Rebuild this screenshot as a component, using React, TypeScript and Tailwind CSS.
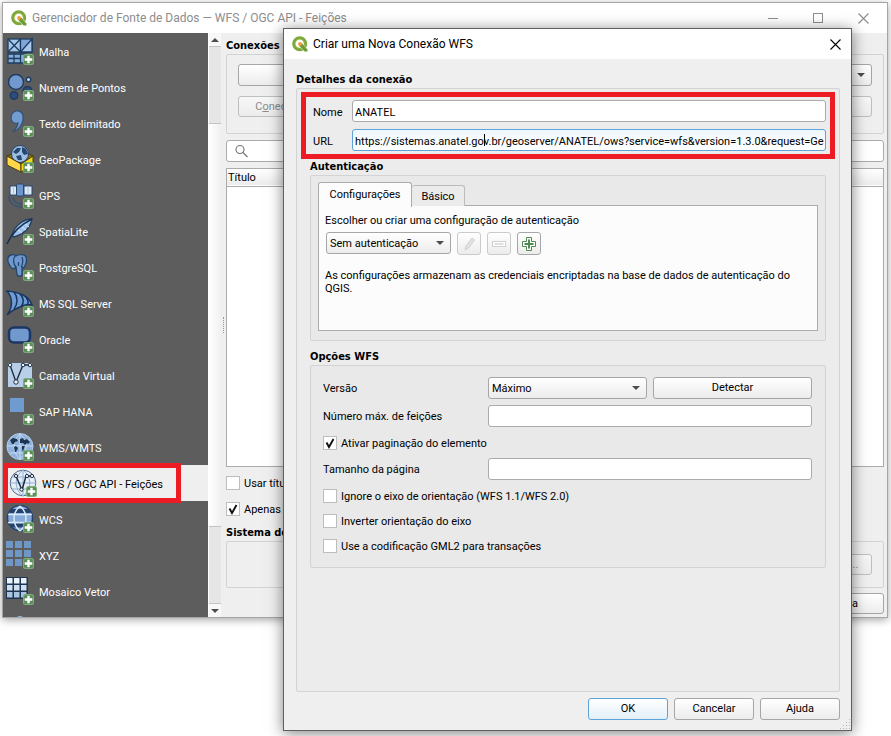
import React, { useState } from "react";

const uiFont = "font-['Roboto','Liberation_Sans',sans-serif]";
const boldFont = "font-['DejaVu_Sans_Condensed','DejaVu_Sans',sans-serif]";

const button = "rounded-[3px] border border-[#a6a6a6] bg-linear-to-b from-white to-[#ececec] text-center";
const disabledButton =
  "rounded-[3px] border border-[#bfbfbf] bg-linear-to-b from-[#f7f7f7] to-[#ececec] text-center text-[#8a8a8a]";
const field =
  "h-[22px] w-full rounded-[3px] border border-[#ababab] bg-white px-[2px] pt-[2px] text-black outline-none";
const frame = "rounded-[2px] border border-[#d3d3d3]";

/* ---------- icons ---------- */

const Plus = () => (
  <g>
    <rect x="17" y="17" width="11" height="11" rx="2.500" fill="#7fae7c" />
    <rect x="18" y="18" width="9" height="9" rx="1.500" fill="#5b8f5a" />
    <path d="M22.500 18.700v7.600M18.700 22.500h7.600" stroke="#fff" strokeWidth="2.400" />
  </g>
);

const icons: Record<string, React.ReactNode> = {
  mesh: (
    <g stroke="#1d3d60" strokeWidth="1.300">
      <rect x="2" y="2" width="12.500" height="13" fill="#a6c6ea" />
      <rect x="14.500" y="2" width="11.500" height="13" fill="#7fa6d6" />
      <path d="M14.500 15L26 2v13z" fill="#a9c8ec" />
      <path d="M2 2l12.500 13M14.500 2L2 15" />
      <path d="M2 17h6v4.500H2zM8 17h6.500v4.500H8zM2 21.500h6V26H2zM8 21.500h6.500V26H8zM14.500 17H20v9h-5.500z" fill="#85abd9" />
    </g>
  ),
  points: (
    <g stroke="#1f3b60" strokeWidth="1.400">
      <circle cx="10" cy="9" r="7.500" fill="#7199cd" />
      <circle cx="22.500" cy="6.500" r="2.200" fill="#c6dcf4" />
      <circle cx="8" cy="22.500" r="3.800" fill="#2c4c7c" />
      <circle cx="21.500" cy="18" r="4.500" fill="#2a4a78" />
    </g>
  ),
  comma: (
    <path
      d="M10 2c5-1 8 3 7 9-1 6-4 9-10 12 3-4 5-6 5-9-4 1-7-1-7-5 0-4 2-6 5-7z"
      fill="#729bd0"
      stroke="#2f5079"
      strokeWidth="1.200"
    />
  ),
  geopackage: (
    <g>
      <path d="M1 11l14-6 12 6-12 8z" fill="#8b7212" stroke="#4f3a0c" />
      <circle cx="14" cy="9" r="8.500" fill="#9cbfe6" stroke="#24405f" />
      <path d="M7 7l4-4 4 0-2 4-3 2zM16 2l4 2 2 5-4 1-2-3zM10 11l5-1 1 5h-4z" fill="#27476e" />
      <path d="M1 11l14 8v8L1 20z" fill="#ffd84a" stroke="#4f3a0c" />
      <path d="M15 19l12-8v9l-12 7z" fill="#eadb1c" stroke="#4f3a0c" />
    </g>
  ),
  gps: (
    <g stroke="#27476b">
      <rect x="4" y="5" width="7" height="9" fill="#dbe9f9" />
      <rect x="18" y="5" width="8" height="9" fill="#dbe9f9" />
      <rect x="10.500" y="3" width="7" height="12" rx="1" fill="#6d97cc" />
      <path d="M7.500 5v9M22 5v9" stroke="#a5c2e5" />
      <path d="M3 15c0 7 5 11 13 11M7 16c0 4 4 7 9 7" fill="none" strokeWidth="1.800" stroke="#3d5573" />
    </g>
  ),
  feather: (
    <g>
      <path d="M26 2c-8 0-17 6-20 16l2 2c8-2 16-8 18-18z" fill="#9fc3ec" stroke="#1f3f63" strokeWidth="1.300" />
      <path d="M26 2C16 7 6 15 1 27" fill="none" stroke="#16304d" strokeWidth="1.500" />
      <path d="M19 7l4 3M16 10l4 3M12 13l4 3" stroke="#d8e8fa" />
    </g>
  ),
  elephant: (
    <g fill="#6f99ce" stroke="#24456d" strokeWidth="1.300">
      <path d="M2 5c1-4 6-4 8-2 3-2 9-2 10 1 1 4 0 9-3 11l-1-1v7c0 3-5 3-5 0l-1-7-3 2C4 14 1 9 2 5z" />
      <path d="M9 3c-2 3-2 8 1 11M16 4c1 3 1 7-1 10M12.500 9v4" fill="none" />
    </g>
  ),
  mssql: (
    <g stroke="#173760" strokeWidth="1.500" fill="#6f9bd6">
      <path d="M1 2c11 1 22 5 25 14-4-1-9 0-12 2-5 2-9 4-13 8 6-8 6-17 0-24z" />
      <path d="M8 3c4 5 4 12 0 17M14 5c4 4 4 9 1 13M20 8c2 3 3 6 1 8" fill="none" />
    </g>
  ),
  oracle: <rect x="3" y="2.500" width="21" height="15" rx="5" fill="#7199cd" stroke="#1c3765" strokeWidth="2.500" />,
  virtual: (
    <g>
      <rect x="2" y="2" width="24" height="24" fill="#b7cfe9" />
      <path d="M4 4l6 17 7-17h8" fill="none" stroke="#222f40" strokeWidth="1.400" />
      <g fill="#eaf2fb" stroke="#222f40">
        <circle cx="4" cy="4" r="1.800" />
        <circle cx="10" cy="21" r="2.200" />
        <circle cx="17" cy="4" r="1.800" />
        <circle cx="24" cy="4" r="1.800" />
      </g>
    </g>
  ),
  hana: <rect x="4" y="1" width="14" height="14" fill="#6f9bd1" />,
  wms: (
    <g>
      <circle cx="14" cy="13.500" r="13" fill="#8fb3dc" stroke="#b4cdea" />
      <path
        d="M14 1v25M1 13h26M4 7h20M4 20h20M14 1c-8 7-8 18 0 25M14 1c8 7 8 18 0 25"
        stroke="#c5daf1"
        fill="none"
      />
      <path
        fill="#1d3654"
        d="M4 7l3-2 4 1 1 2-3 1-1 2-2 0zM14 6l3-1 1 2 3-1 3 3-2 2-1-1-2 2-2-2-3 0zM8 14l2-1 2 2-2 4-1 0zM16 13h3l-1 2-1 4-1-3z"
      />
    </g>
  ),
  wfs: (
    <g>
      <circle cx="14" cy="14" r="12.800" fill="#e6eef8" stroke="#53687f" />
      <path
        d="M14 1v26M1 14h26M3 8h22M3 20h22M14 1c-9 7-9 19 0 26M14 1c9 7 9 19 0 26"
        fill="none"
        stroke="#8fb0d6"
      />
      <path d="M7 7l6 14 4-14h6" fill="none" stroke="#1d2c3d" strokeWidth="1.500" />
      <g fill="#fff" stroke="#1d2c3d">
        <circle cx="7" cy="7" r="1.600" />
        <circle cx="12.500" cy="20.500" r="1.600" />
        <circle cx="18" cy="7" r="1.600" />
        <circle cx="23" cy="7" r="1.600" />
      </g>
    </g>
  ),
  wcs: (
    <g>
      <circle cx="14" cy="13" r="12.500" fill="#86abd8" stroke="#23436b" strokeWidth="1.500" />
      <path d="M4 6h20M4 20.500h20" stroke="#23436b" strokeWidth="4" />
      <path
        d="M2 9.500h24M2 17.500h24M14 1c-8 7-8 18 0 25M14 1c8 7 8 18 0 25"
        fill="none"
        stroke="#d9e8f8"
        strokeWidth="1.500"
      />
    </g>
  ),
  xyz: (
    <g fill="#6f97c6">
      {[0, 9, 18].map((y) => [0, 9, 18].map((x) => <rect key={`${x}-${y}`} x={x} y={y} width="7" height="7" />))}
    </g>
  ),
  vtile: (
    <g>
      <rect x="0" y="0" width="22" height="22" fill="#1d3550" />
      {["#e9f1fa", "#cfdff1", "#a9c3e3"].map((fill, r) =>
        [0, 1, 2].map((c) => (
          <rect key={`${r}-${c}`} x={1 + c * 7} y={1 + r * 7} width="5.500" height="5.500" fill={fill} />
        ))
      )}
    </g>
  ),
  cloud: <ellipse cx="14" cy="7" rx="4" ry="4" fill="#8fb8e6" />,
};

const Logo = () => (
  <svg viewBox="0 0 16 16" className="size-4 shrink-0">
    <circle cx="7.700" cy="7.700" r="5.900" fill="none" stroke="#7da83c" strokeWidth="3.200" />
    <circle cx="7.700" cy="7.700" r="4.400" fill="none" stroke="#b9cf6b" strokeWidth=".6" />
    <path d="M7.500 7.500h3l5.200 6v2.300h-3L7.500 10.500z" fill="#6d9c35" stroke="#fff" strokeWidth=".5" />
    <circle cx="8" cy="8" r="1.900" fill="#f09a3c" />
  </svg>
);

const Arrow = ({ up = false }: { up?: boolean }) => (
  <svg viewBox="0 0 8 4" className="h-1 w-2">
    <path d={up ? "M0 4L4 0l4 4z" : "M0 0h8L4 4z"} fill="#4d4d4d" />
  </svg>
);

const CloseIcon = () => (
  <svg viewBox="0 0 11 11" className="size-[11px]">
    <path d="M.5.5l10 10M10.500.5l-10 10" stroke="currentColor" strokeWidth="1.100" />
  </svg>
);

/* ---------- controls ---------- */

type SelectProps = { id: string; value: string; label?: string };

const Select = ({ id, value, label }: SelectProps) => (
  <div className="relative">
    <select
      id={id}
      aria-label={label}
      className={`${button} h-[22px] w-full appearance-none pt-px pr-5 pl-[3px] text-left outline-none`}
    >
      <option>{value}</option>
    </select>
    <span className="pointer-events-none absolute inset-y-0 right-[7px] flex items-center">
      <Arrow />
    </span>
  </div>
);

type CheckProps = { label: string; initial?: boolean };

const Check = ({ label, initial = false }: CheckProps) => {
  const [checked, setChecked] = useState(initial);
  return (
    <label className="flex h-[19px] items-center gap-1 whitespace-nowrap">
      <span className="relative size-[14px] shrink-0">
        <input
          type="checkbox"
          checked={checked}
          onChange={() => setChecked(!checked)}
          className="block size-[14px] appearance-none border border-[#bdbdbd] bg-white"
        />
        {checked && (
          <svg viewBox="0 0 14 14" className="pointer-events-none absolute inset-0">
            <path d="M3.500 6.500l2.500 4.500 4.500-8" fill="none" stroke="#111" strokeWidth="1.900" />
          </svg>
        )}
      </span>
      <span className="pt-[2px]">{label}</span>
    </label>
  );
};

const Heading = ({ children }: { children: React.ReactNode }) => (
  <h2 className={`${boldFont} pt-px text-[11px] leading-[14px] font-bold whitespace-nowrap`}>{children}</h2>
);

/* ---------- main window ---------- */

const sources = [
  { icon: "mesh", label: "Malha" },
  { icon: "points", label: "Nuvem de Pontos" },
  { icon: "comma", label: "Texto delimitado" },
  { icon: "geopackage", label: "GeoPackage" },
  { icon: "gps", label: "GPS" },
  { icon: "feather", label: "SpatiaLite" },
  { icon: "elephant", label: "PostgreSQL" },
  { icon: "mssql", label: "MS SQL Server" },
  { icon: "oracle", label: "Oracle" },
  { icon: "virtual", label: "Camada Virtual" },
  { icon: "hana", label: "SAP HANA" },
  { icon: "wms", label: "WMS/WMTS" },
  { icon: "wfs", label: "WFS / OGC API - Feições" },
  { icon: "wcs", label: "WCS" },
  { icon: "xyz", label: "XYZ" },
  { icon: "vtile", label: "Mosaico Vetor" },
  { icon: "cloud", label: "" },
];

const Sidebar = () => (
  <ul className="w-[205px] shrink-0 overflow-hidden bg-[#5d5d5d] text-white contain-size">
    {sources.map(({ icon, label }) => {
      const active = icon === "wfs";
      return (
        <li
          key={icon}
          className={`relative flex h-9 items-center ${active ? "bg-[#efefef] pl-[6px] text-black" : "pl-[3px]"}`}
        >
          <svg viewBox="0 0 28 28" className="size-7 shrink-0">
            {icons[icon]}
            <Plus />
          </svg>
          <span className="pt-[3px] pl-[5px]">{label}</span>
          {active && (
            <span className="pointer-events-none absolute -top-[2px] -bottom-[2px] left-0 w-[178px] border-[5px] border-[#ed1c24]" />
          )}
        </li>
      );
    })}
  </ul>
);

const ScrollBar = () => (
  <div className="flex w-[13px] shrink-0 flex-col border-l border-white bg-[#e6e6e6]">
    <div className="flex h-[13px] items-center justify-center bg-[#f8f8f8]">
      <Arrow up />
    </div>
    <div className="flex-[3_1_0%] border-y border-[#c4c4c4]" />
    <div className="flex-[16_1_0%] bg-linear-to-r from-white to-[#f0f0f0]" />
    <div className="flex-[3_1_0%] border-y border-[#c4c4c4]" />
    <div className="flex h-[13px] items-center justify-center bg-[#f8f8f8]">
      <Arrow />
    </div>
  </div>
);

const SourceManager = () => (
  <div className="mr-[3px] ml-[2px] border border-[#a5a5a5] bg-[#efefef] shadow-[0_2px_8px_rgba(0,0,0,0.35)]">
    <header className="flex h-[30px] items-center bg-white pl-2 text-[12px] text-[#8d8d8d]">
      <Logo />
      <h1 className="flex-1 pl-[5px] whitespace-nowrap">Gerenciador de Fonte de Dados — WFS / OGC API - Feições</h1>
      <div className="flex items-center gap-[35px] pr-[18px]">
        <button aria-label="Minimizar" className="h-px w-[10px] bg-[#8d8d8d]" />
        <button aria-label="Maximizar" className="size-[10px] border border-[#8d8d8d]" />
        <button aria-label="Fechar">
          <CloseIcon />
        </button>
      </div>
    </header>
    <div className="flex">
      <Sidebar />
      <ScrollBar />
      <div className="flex w-[5px] shrink-0 items-center justify-center">
        <span className="h-4 border-l border-dotted border-[#9a9a9a]" />
      </div>
      <main className="flex min-w-0 flex-1 flex-col pt-[5px] pr-[3px] pb-[3px]">
        <Heading>Conexões</Heading>
        <div className={`${frame} mt-px flex flex-col gap-[10px] px-[11px] pt-[9px] pb-4`}>
          <Select id="server" value="" label="Conexões" />
          <div className="flex justify-between">
            <button className={`${disabledButton} h-[21px] w-[79px]`}>
              C<u>o</u>nectar
            </button>
            <button className={`${disabledButton} h-[21px] w-[79px]`} aria-label="Salvar" />
          </div>
        </div>
        <div className="mt-[6px] flex h-[22px] items-center rounded-[3px] border border-[#ababab] bg-white pl-2">
          <svg viewBox="0 0 14 14" className="size-[14px]" fill="none" stroke="#707070" strokeWidth="1.100">
            <circle cx="5" cy="5.500" r="4" />
            <path d="M8 8.500l4.500 4.500" />
          </svg>
          <input aria-label="Buscar" className="h-full min-w-0 flex-1 px-1 outline-none" />
        </div>
        <div className="mt-[6px] h-[299px] border border-[#ababab] bg-white">
          <table className="w-full">
            <thead>
              <tr className="h-[17px] border-b border-[#ababab] bg-linear-to-b from-white to-[#ececec]">
                <th className="pt-[2px] pl-px text-left font-normal">Título</th>
              </tr>
            </thead>
          </table>
        </div>
        <div className="mt-[6px] flex flex-col gap-[7px]">
          <Check label="Usar título" />
          <Check label="Apenas" initial />
        </div>
        <div className="mt-[7px]">
          <Heading>Sistema de Coordenadas</Heading>
        </div>
        <div className={`${frame} mt-px flex justify-end py-3 pr-[11px]`}>
          <button className={`${disabledButton} h-[21px] w-9`}>...</button>
        </div>
        <div className="mt-[5px] flex justify-end">
          <button className={`${button} h-[21px] w-20`}>Ajuda</button>
        </div>
      </main>
    </div>
  </div>
);

/* ---------- dialog ---------- */

const toolButton =
  "flex h-[23px] w-6 items-center justify-center rounded-[3px] border border-[#a6a6a6] bg-linear-to-b from-white to-[#ececec] disabled:border-[#cbcbcb]";

const AuthPanel = () => (
  <section className={`${frame} mt-px bg-[#e9e9e9] px-[7px] pt-[6px] pb-[9px]`}>
    <div className="flex items-end" role="tablist">
      <button
        role="tab"
        aria-selected="true"
        className="z-10 -mb-px h-[25px] w-[94px] rounded-t-[3px] border border-b-0 border-[#ababab] bg-[#fcfcfc]"
      >
        Configurações
      </button>
      <button
        role="tab"
        aria-selected="false"
        className="h-[21px] w-[53px] rounded-t-[3px] border border-b-0 border-l-0 border-[#bcbcbc] bg-[#ebebeb] pt-px"
      >
        Básico
      </button>
    </div>
    <div className="-mt-px h-[126px] border border-[#ababab] bg-[#fcfcfc] px-[6px] pt-2">
      <label htmlFor="auth" className="block leading-[14px]">
        Escolher ou criar uma configuração de autenticação
      </label>
      <div className="mt-1 flex gap-[6px] pl-px">
        <div className="w-[125px]">
          <Select id="auth" value="Sem autenticação" />
        </div>
        <button className={toolButton} aria-label="Editar" disabled>
          <svg viewBox="0 0 14 14" className="size-[14px]">
            <path d="M3 13l1-4 6-8 2.500 2-6 8z" fill="#e2e2e2" stroke="#d0d0d0" />
          </svg>
        </button>
        <button className={toolButton} aria-label="Remover" disabled>
          <svg viewBox="0 0 14 14" className="size-[14px]">
            <rect x=".5" y="4.500" width="13" height="5" fill="#fff" stroke="#cfcfcf" />
            <path d="M2.500 7h9" stroke="#d6d6d6" strokeWidth="1.500" />
          </svg>
        </button>
        <button className={toolButton} aria-label="Adicionar">
          <svg viewBox="0 0 14 14" className="size-[14px]">
            <path d="M4.500.5h5v4h4v5h-4v4h-5v-4h-4v-5h4z" fill="#fff" stroke="#4f8a55" />
            <path d="M7 2.500v9M2.500 7h9" stroke="#4f8a55" strokeWidth="2" />
          </svg>
        </button>
      </div>
      <p className="mt-[14px] leading-[13px]">
        As configurações armazenam as credenciais encriptadas na base de dados de autenticação do QGIS.
      </p>
    </div>
  </section>
);

const WfsOptions = () => (
  <section
    className={`${frame} mt-px grid grid-cols-[159px_1fr_1fr] items-center gap-[6px] bg-[#e9e9e9] px-[13px] pt-[11px] pb-3 pl-3`}
  >
    <label htmlFor="version" className="pt-[2px]">
      Versão
    </label>
    <Select id="version" value="Máximo" />
    <button className={`${button} h-[22px]`}>Detectar</button>
    <label htmlFor="max" className="pt-[2px]">
      Número máx. de feições
    </label>
    <input id="max" className={`${field} col-span-2`} />
    <div className="col-span-3">
      <Check label="Ativar paginação do elemento" initial />
    </div>
    <label htmlFor="page" className="pt-[2px]">
      Tamanho da página
    </label>
    <input id="page" className={`${field} col-span-2`} />
    <div className="col-span-3">
      <Check label="Ignore o eixo de orientação (WFS 1.1/WFS 2.0)" />
    </div>
    <div className="col-span-3">
      <Check label="Inverter orientação do eixo" />
    </div>
    <div className="col-span-3">
      <Check label="Use a codificação GML2 para transações" />
    </div>
  </section>
);

const ConnectionDialog = () => (
  <div
    role="dialog"
    aria-labelledby="dialog-title"
    className="absolute top-[28px] right-[39px] left-[283px] border border-[#5f5f5f] bg-[#efefef] shadow-[0_2px_14px_rgba(0,0,0,0.5)]"
  >
    <header className="flex h-[30px] items-center bg-white pr-[10px] pl-2 text-[12px]">
      <Logo />
      <h1 id="dialog-title" className="flex-1 pl-[5px]">
        Criar uma Nova Conexão WFS
      </h1>
      <button aria-label="Fechar">
        <CloseIcon />
      </button>
    </header>
    <div className="pt-[13px] pr-[11px] pb-[10px] pl-3">
      <Heading>Detalhes da conexão</Heading>
      <div className={`${frame} mt-px bg-[#ececec] px-[13px] pt-[11px] pb-[123px]`}>
        <div className="relative grid grid-cols-[39px_1fr] items-center gap-y-[7px] pl-[3px]">
          <label htmlFor="name" className="pt-[3px]">
            Nome
          </label>
          <input id="name" defaultValue="ANATEL" className={field} />
          <label htmlFor="url" className="pt-[3px]">
            URL
          </label>
          <div className="relative">
            <input
              id="url"
              defaultValue="https://sistemas.anatel.gov.br/geoserver/ANATEL/ows?service=wfs&version=1.3.0&request=Ge"
              className="block h-[22px] w-full rounded-[3px] border border-[#5ba3d9] bg-linear-to-b from-[#eef7fd] to-white pt-[2px] pl-[2px] outline-none"
            />
            <span className="absolute top-[5px] left-[132px] h-3 w-px bg-black" />
          </div>
          <span className="pointer-events-none absolute -inset-x-[9px] -inset-y-2 border-[5px] border-[#ed1c24]" />
        </div>
        <div className="mt-2">
          <Heading>Autenticação</Heading>
        </div>
        <AuthPanel />
        <div className="mt-2">
          <Heading>Opções WFS</Heading>
        </div>
        <WfsOptions />
      </div>
      <div className="mt-[6px] flex justify-end gap-[6px]">
        <button className="h-[22px] w-20 rounded-[3px] border border-[#5ba3d9] bg-linear-to-b from-white to-[#e3f0fa]">
          OK
        </button>
        <button className={`${button} h-[22px] w-20`}>Cancelar</button>
        <button className={`${button} h-[22px] w-20`}>Ajuda</button>
      </div>
    </div>
    <svg viewBox="0 0 12 12" className="absolute right-0 bottom-0 size-3" fill="#b5b5b5">
      <path d="M10 1h1v1h-1zM7 4h1v1h-1zM10 4h1v1h-1zM4 7h1v1h-1zM7 7h1v1h-1zM10 7h1v1h-1zM1 10h1v1h-1zM4 10h1v1h-1zM7 10h1v1h-1zM10 10h1v1h-1z" />
    </svg>
  </div>
);

const App: React.FC = () => {
  return (
    <div
      className={`${uiFont} relative min-h-screen overflow-hidden bg-white pt-[2px] text-[11px] leading-[14px] text-black`}
    >
      <SourceManager />
      <ConnectionDialog />
    </div>
  );
};

export default App;
